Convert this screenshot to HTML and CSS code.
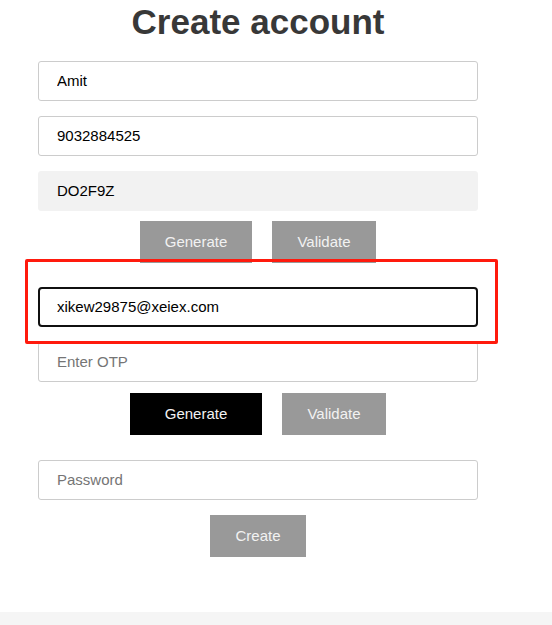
FILE: index.html
```html
<!DOCTYPE html>
<html lang="en">
<head>
<meta charset="utf-8">
<title>Create account</title>
<link rel="stylesheet" href="styles.css">
</head>
<body>
<main class="form">
  <h1 class="title">Create account</h1>
  <input class="field" type="text" value="Amit">
  <input class="field field--gap" type="text" value="9032884525">
  <input class="field field--gap field--filled" type="text" value="DO2F9Z" readonly>
  <div class="actions actions--first">
    <button class="btn btn--gen">Generate</button>
    <button class="btn btn--val">Validate</button>
  </div>
  <input class="field field--email field--focus" type="email" value="xikew29875@xeiex.com">
  <input class="field field--gap" type="text" placeholder="Enter OTP">
  <div class="actions actions--second">
    <button class="btn btn--dark">Generate</button>
    <button class="btn btn--val">Validate</button>
  </div>
  <input class="field field--password" type="password" placeholder="Password">
  <div class="actions actions--create">
    <button class="btn btn--create">Create</button>
  </div>
</main>
<div class="highlight"></div>
<div class="band"></div>
</body>
</html>
```
FILE: styles.css
```css
* { box-sizing: border-box; }
html, body { margin: 0; padding: 0; }
body {
  background: #ffffff;
  font-family: "Liberation Sans", Arial, sans-serif;
  width: 552px;
  height: 625px;
  position: relative;
  overflow: hidden;
}
.form {
  width: 440px;
  margin-left: 38px;
  display: flex;
  flex-direction: column;
}
.title {
  margin: 0;
  height: 61px;
  padding-top: 2px;
  font-size: 35px;
  line-height: 40px;
  font-weight: 700;
  color: #383838;
  text-align: center;
}
.field {
  display: block;
  width: 440px;
  height: 40px;
  margin: 0;
  padding: 0 18px 1px;
  border: 1px solid #cccccc;
  border-radius: 3px;
  background: #ffffff;
  font-family: "Liberation Sans", Arial, sans-serif;
  font-size: 15px;
  color: #000000;
  outline: none;
}
.field::placeholder { color: #757575; }
.field--gap { margin-top: 15px; }
.field--filled {
  background: #f2f2f2;
  border-color: #f2f2f2;
}
.field--email { margin-top: 24px; }
.field--focus {
  border: 2px solid #101010;
  border-radius: 4px;
  padding: 0 17px 1px;
}
.field--password { margin-top: 25px; }
.actions {
  display: flex;
  justify-content: center;
  gap: 20px;
}
.actions--first { margin-top: 10px; }
.actions--second { margin-top: 11px; }
.actions--create { margin-top: 15px; }
.btn {
  height: 42px;
  border: 0;
  border-radius: 0;
  margin: 0;
  padding: 0 0 2px;
  background: #999999;
  color: #f2f2f2;
  font-family: "Liberation Sans", Arial, sans-serif;
  font-size: 15px;
}
.btn--gen { width: 112px; }
.btn--val { width: 104px; }
.btn--dark { width: 132px; background: #000000; color: #f2f2f2; }
.btn--create { width: 96px; }
.highlight {
  position: absolute;
  left: 25px;
  top: 259px;
  width: 473px;
  height: 85px;
  border: 3px solid #ff1a0d;
  border-radius: 2px;
  pointer-events: none;
}
.band {
  position: absolute;
  left: 0;
  right: 0;
  top: 612px;
  height: 13px;
  background: #f5f5f5;
}
```
